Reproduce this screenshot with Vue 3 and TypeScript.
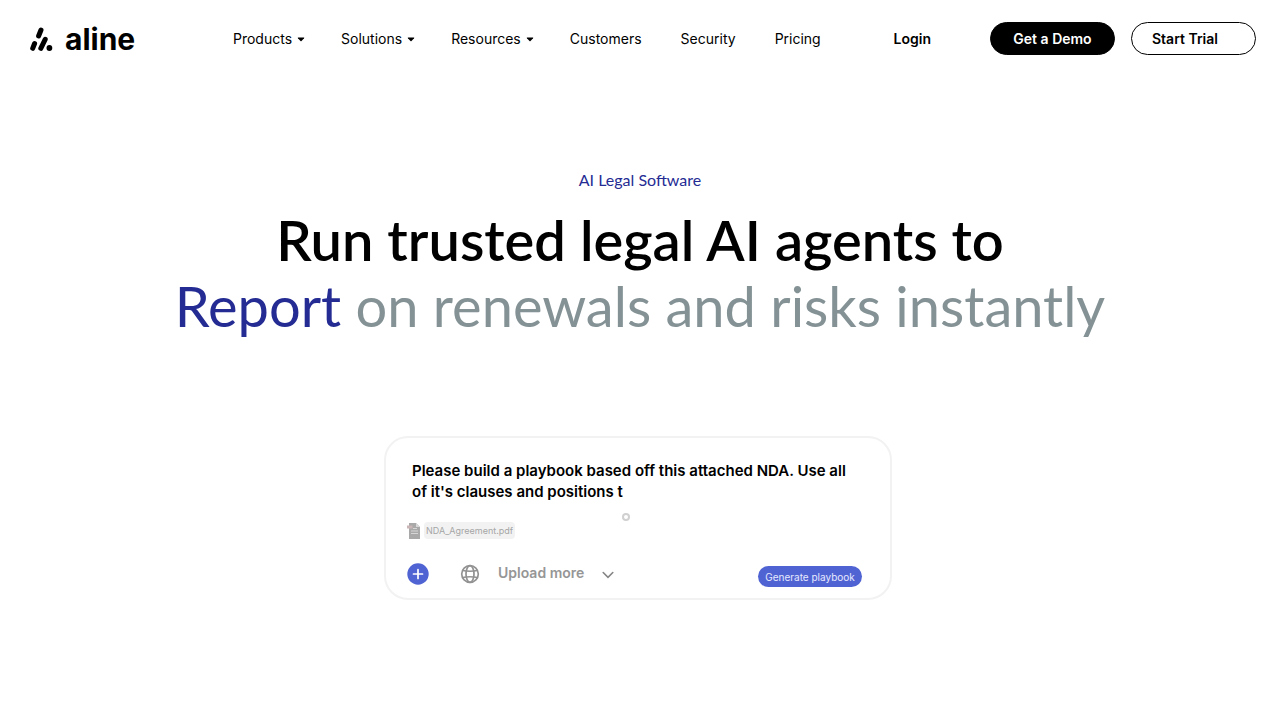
<script setup lang="ts">
import { ref } from 'vue'

interface NavItem {
  label: string
  menu: boolean
}

const navItems: NavItem[] = [
  { label: 'Products', menu: true },
  { label: 'Solutions', menu: true },
  { label: 'Resources', menu: true },
  { label: 'Customers', menu: false },
  { label: 'Security', menu: false },
  { label: 'Pricing', menu: false },
]

const prompt = ref(
  "Please build a playbook based off this attached NDA. Use all of it's clauses and positions t",
)
</script>

<template>
  <div class="page">
    <header class="header">
      <a class="logo" href="#" aria-label="aline home">
        <svg class="mark" viewBox="0 0 23 24" aria-hidden="true">
          <g fill="none" stroke="#000" stroke-width="5" stroke-linecap="round">
            <path d="M8.600 9 11 3" />
            <path d="M2.700 21.300 4.600 16.500" />
            <path d="M10.800 21.300 15.200 12.300" />
          </g>
          <circle cx="19.400" cy="21" r="2.900" />
        </svg>
        <span class="wordmark">aline</span>
      </a>

      <nav class="nav" aria-label="Main">
        <template v-for="item in navItems" :key="item.label">
          <button v-if="item.menu" class="nav-item menu" type="button">
            {{ item.label }}
            <svg class="caret" viewBox="0 0 8 5" aria-hidden="true">
              <path d="M1.200.5h5.600q.9 0 .3.7L4.500 4.100q-.5.5-1 0L.9 1.200Q.3.5 1.200.5z" />
            </svg>
          </button>
          <a v-else class="nav-item" href="#">{{ item.label }}</a>
        </template>
      </nav>

      <div class="actions">
        <a class="login" href="#">Login</a>
        <a class="pill dark" href="#">Get a Demo</a>
        <a class="pill light" href="#">Start Trial</a>
      </div>
    </header>

    <main class="hero">
      <p class="eyebrow">AI Legal Software</p>
      <h1 class="title">
        <span class="lead">Run trusted legal AI agents to</span>
        <span class="rotating"><span class="verb">Report</span> on renewals and risks instantly</span>
      </h1>

      <form class="card" @submit.prevent>
        <textarea v-model="prompt" class="prompt" rows="2" aria-label="Prompt" spellcheck="false"></textarea>
        <span class="cursor" aria-hidden="true"></span>

        <div class="file">
          <svg class="file-icon" viewBox="0 0 14 16" aria-hidden="true">
            <path d="M2 0h7l4 4v12H2z" fill="#a9a9a9" />
            <path d="M9 0l4 4H9z" fill="#d8d8d8" />
            <path d="M0 2.500h5.500v3H0z" fill="#c9b5b5" />
            <path d="M4 8h7M4 10.500h7M6 5.500h4" stroke="#d6d6d6" fill="none" />
          </svg>
          <span class="file-name">NDA_Agreement.pdf</span>
        </div>

        <div class="tools">
          <button class="add" type="button" aria-label="Add">
            <svg viewBox="0 0 22 22" aria-hidden="true">
              <circle cx="11" cy="11" r="10.700" fill="#5063d3" />
              <path d="M11 6.500v9M6.500 11h9" stroke="#fff" stroke-width="1.700" stroke-linecap="round" />
            </svg>
          </button>
          <button class="web" type="button" aria-label="Web search">
            <svg viewBox="0 0 20 20" fill="none" stroke="#929292" stroke-width="1.700" aria-hidden="true">
              <circle cx="10" cy="10" r="8.300" />
              <ellipse cx="10" cy="10" rx="4" ry="8.300" />
              <path d="M2.500 6.500Q10 8 17.500 6.500M2.500 13.500Q10 12 17.500 13.500" />
            </svg>
          </button>
          <button class="upload" type="button">
            Upload more
            <svg class="chevron" viewBox="0 0 12 8" aria-hidden="true">
              <path d="M1.200 1.500 6 6.300l4.800-4.800" fill="none" stroke="#858585" stroke-width="1.600" stroke-linecap="round" />
            </svg>
          </button>
          <button class="generate" type="submit">Generate playbook</button>
        </div>
      </form>
    </main>
  </div>
</template>

<style>
body {
  background: #fff;
}
</style>

<style scoped>
.page {
  font-family: Inter, "Liberation Sans", sans-serif;
  color: #000;
}

a {
  color: inherit;
  text-decoration: none;
}

button {
  padding: 0;
  border: 0;
  background: none;
  color: inherit;
  font: inherit;
  cursor: pointer;
}

svg {
  display: block;
}

.header {
  display: flex;
  align-items: center;
  padding: 22px 24px 0 30px;
}

.logo {
  display: flex;
  align-items: center;
  gap: 12px;
  width: 203px;
  height: 33px;
}

.mark {
  width: 23px;
  height: 24px;
}

.wordmark {
  font-size: 30px;
  font-weight: 700;
  line-height: 32px;
}

.nav {
  display: flex;
}

.nav-item {
  display: flex;
  align-items: center;
  gap: 5px;
  margin-right: 39px;
  font-size: 14px;
  line-height: 20px;
}

.menu {
  margin-right: 36px;
}

.caret {
  width: 8px;
  height: 5px;
  margin-top: 1px;
}

.actions {
  display: flex;
  align-items: center;
  margin-left: auto;
  font-size: 14px;
  font-weight: 600;
}

.login {
  margin-right: 59px;
}

.pill {
  box-sizing: border-box;
  width: 125px;
  height: 33px;
  border: 1px solid #000;
  border-radius: 17px;
  line-height: 32px;
}

.dark {
  margin-right: 16px;
  background: #000;
  color: #fff;
  text-align: center;
}

.light {
  padding-left: 20px;
}

.hero {
  display: flex;
  flex-direction: column;
  align-items: center;
  padding: 113px 24px 60px;
}

.eyebrow {
  margin: 0;
  color: #242c94;
  font-family: Lato, sans-serif;
  font-size: 16px;
  line-height: 24px;
}

.title {
  display: flex;
  flex-direction: column;
  margin: 15px 0 0;
  font-family: Lato, sans-serif;
  font-size: 56px;
  font-weight: 400;
  line-height: 66px;
  text-align: center;
}

.lead {
  font-weight: 600;
}

.rotating {
  color: #849296;
}

.verb {
  color: #242c94;
}

.card {
  position: relative;
  box-sizing: border-box;
  width: 508px;
  max-width: 100%;
  margin: 97px 4px 0 0;
  padding: 22px 28px 11px 21px;
  border: 2px solid #f2f2f2;
  border-radius: 24px;
}

.prompt {
  display: block;
  box-sizing: border-box;
  width: 100%;
  height: 42px;
  padding: 0 0 0 5px;
  border: 0;
  outline: 0;
  background: none;
  color: #000;
  font: 600 15px/21px Inter, "Liberation Sans", sans-serif;
  resize: none;
  overflow: hidden;
}

.cursor {
  position: absolute;
  top: 75px;
  left: 236px;
  width: 4px;
  height: 4px;
  border: 2px solid #d0d0d0;
  border-radius: 50%;
}

.file {
  display: flex;
  align-items: center;
  gap: 3px;
  margin-top: 20px;
}

.file-icon {
  width: 14px;
  height: 16px;
}

.file-name {
  padding: 0 2px;
  border-radius: 4px;
  background: #f2f2f2;
  color: #a6a6a6;
  font-size: 9px;
  line-height: 17px;
}

.tools {
  display: flex;
  align-items: flex-start;
  margin-top: 24px;
}

.add {
  width: 22px;
  height: 22px;
}

.web {
  width: 20px;
  height: 20px;
  margin-top: 1px;
  margin-left: 31px;
}

.upload {
  display: flex;
  align-items: center;
  gap: 18px;
  margin-left: 18px;
  color: #969696;
  font-size: 14px;
  font-weight: 600;
  line-height: 20px;
}

.chevron {
  width: 12px;
  height: 8px;
  margin-top: 4px;
}

.generate {
  width: 104px;
  height: 21px;
  margin-top: 3px;
  margin-left: auto;
  border-radius: 11px;
  background: #5063d3;
  color: #e6e9ff;
  font-size: 10px;
  line-height: 18px;
}
</style>
